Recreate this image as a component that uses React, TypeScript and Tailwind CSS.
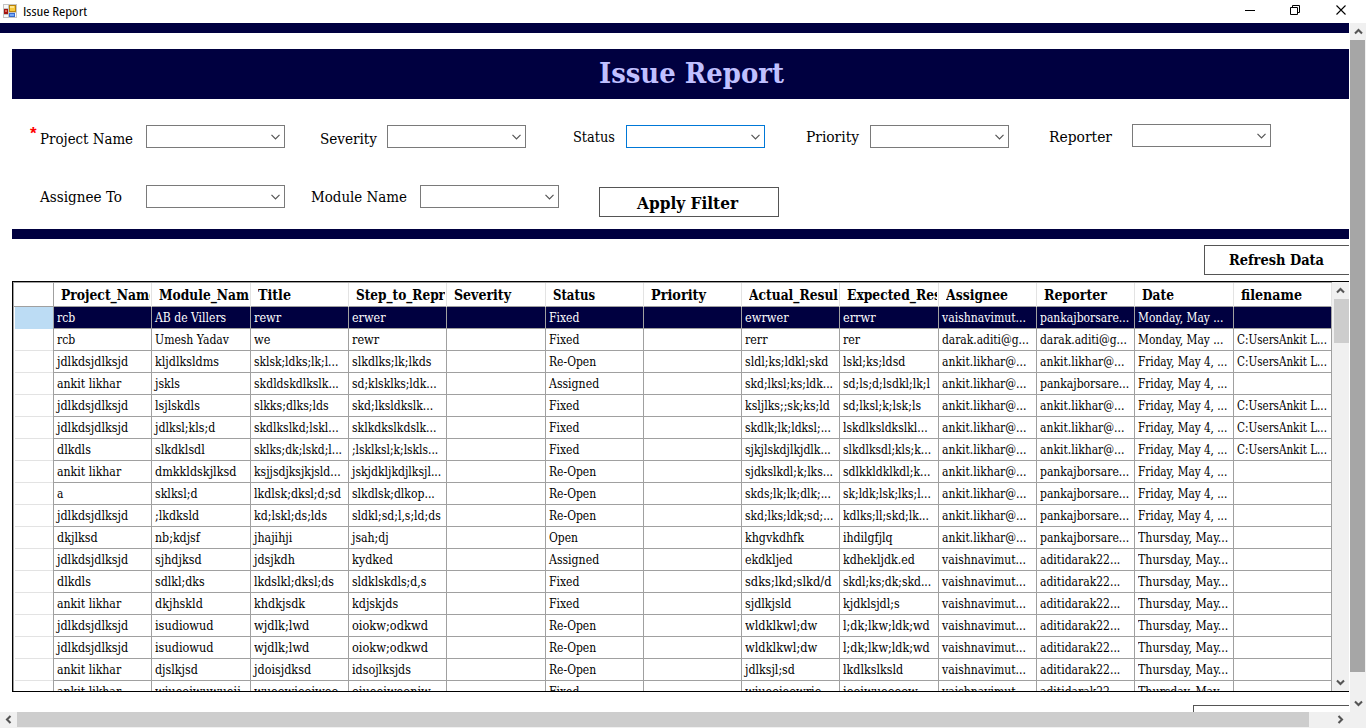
import { useLayoutEffect, useRef } from "react";

const SERIF = "font-['DejaVu_Serif_Condensed','DejaVu_Serif',serif] [font-stretch:condensed]";

/* Text set to a fixed advance width. */
function Fit({ text, width, className = "" }: { text: string; width: number; className?: string }) {
  const ref = useRef<HTMLSpanElement>(null);
  useLayoutEffect(() => {
    const el = ref.current;
    if (el && el.offsetWidth) {
      el.style.transform = "none";
      el.style.transform = `scaleX(${width / el.getBoundingClientRect().width})`;
    }
  }, [text, width]);
  return (
    <span className="block shrink-0 whitespace-pre" style={{ width }}>
      <span ref={ref} className={`inline-block origin-left whitespace-pre align-top ${className}`}>
        {text}
      </span>
    </span>
  );
}

/* Advance widths of the grid face, in em. */
const ADVANCE: Record<string, number> = {
  a: 0.488, b: 0.547, c: 0.441, d: 0.555, e: 0.488, f: 0.303, g: 0.494, h: 0.552, i: 0.278, j: 0.266,
  k: 0.524, l: 0.271, m: 0.832, n: 0.558, o: 0.531, p: 0.556, q: 0.547, r: 0.414, s: 0.43, t: 0.338,
  u: 0.552, v: 0.504, w: 0.774, x: 0.483, y: 0.504, z: 0.455, " ": 0.22, ".": 0.22, ",": 0.205,
  ";": 0.268, ":": 0.262, "-": 0.31, "/": 0.49, "@": 0.9, "2": 0.554, "4": 0.554,
  A: 0.623, B: 0.611, C: 0.563, D: 0.662, F: 0.537, L: 0.5, M: 0.815, O: 0.63, R: 0.6,
  T: 0.55, U: 0.63, V: 0.605, Y: 0.5,
};
const measure = (s: string) => [...s].reduce((sum, c) => sum + (ADVANCE[c] ?? 0.5), 0) * 13;

const COLS = "grid grid-cols-[40px_98px_99px_98px_98px_99px_98px_98px_98px_99px_98px_98px_99px_98px]";

const HEADERS: [string, number][] = [
  ["Project_Name", 96], ["Module_Nam", 90], ["Title", 33], ["Step_to_Repr", 89], ["Severity", 57],
  ["Status", 42], ["Priority", 55], ["Actual_Resul", 89], ["Expected_Res", 94], ["Assignee", 62],
  ["Reporter", 63], ["Date", 32], ["filename", 61],
];

const V = "vaishnavimut...";
const K = "ankit.likhar@...";
const P = "pankajborsare...";
const A = "aditidarak22...";
const D = "darak.aditi@g...";
const MON = "Monday, May ...";
const FRI = "Friday, May 4, ...";
const THU = "Thursday, May...";
const FILE = "C:UsersAnkit L...";

const ROWS: string[][] = [
  ["rcb", "AB de Villers", "rewr", "erwer", "", "Fixed", "", "ewrwer", "errwr", V, P, MON, ""],
  ["rcb", "Umesh Yadav", "we", "rewr", "", "Fixed", "", "rerr", "rer", D, D, MON, FILE],
  ["jdlkdsjdlksjd", "kljdlksldms", "sklsk;ldks;lk;l...", "slkdlks;lk;lkds", "", "Re-Open", "", "sldl;ks;ldkl;skd", "lskl;ks;ldsd", K, K, FRI, FILE],
  ["ankit likhar", "jskls", "skdldskdlkslk...", "sd;klsklks;ldk...", "", "Assigned", "", "skd;lksl;ks;ldk...", "sd;ls;d;lsdkl;lk;l", K, P, FRI, ""],
  ["jdlkdsjdlksjd", "lsjlskdls", "slkks;dlks;lds", "skd;lksldkslk...", "", "Fixed", "", "ksljlks;;sk;ks;ld", "sd;lksl;k;lsk;ls", K, K, FRI, FILE],
  ["jdlkdsjdlksjd", "jdlksl;kls;d", "skdlkslkd;lskl...", "sklkdkslkdslk...", "", "Fixed", "", "skdlk;lk;ldksl;...", "lskdlksldkslkl...", K, K, FRI, FILE],
  ["dlkdls", "slkdklsdl", "sklks;dk;lskd;l...", ";lsklksl;k;lskls...", "", "Fixed", "", "sjkjlskdjlkjdlk...", "slkdlksdl;kls;k...", K, K, FRI, FILE],
  ["ankit likhar", "dmkkldskjlksd", "ksjjsdjksjkjsld...", "jskjdkljkdjlksjl...", "", "Re-Open", "", "sjdkslkdl;k;lks...", "sdlkkldklkdl;k...", K, P, FRI, ""],
  ["a", "sklksl;d", "lkdlsk;dksl;d;sd", "slkdlsk;dlkop...", "", "Re-Open", "", "skds;lk;lk;dlk;...", "sk;ldk;lsk;lks;l...", K, P, FRI, ""],
  ["jdlkdsjdlksjd", ";lkdksld", "kd;lskl;ds;lds", "sldkl;sd;l,s;ld;ds", "", "Re-Open", "", "skd;lks;ldk;sd;...", "kdlks;ll;skd;lk...", K, P, FRI, ""],
  ["dkjlksd", "nb;kdjsf", "jhajihji", "jsah;dj", "", "Open", "", "khgvkdhfk", "ihdilgfjlq", K, P, THU, ""],
  ["jdlkdsjdlksjd", "sjhdjksd", "jdsjkdh", "kydked", "", "Assigned", "", "ekdkljed", "kdhekljdk.ed", V, A, THU, ""],
  ["dlkdls", "sdlkl;dks", "lkdslkl;dksl;ds", "sldklskdls;d,s", "", "Fixed", "", "sdks;lkd;slkd/d", "skdl;ks;dk;skd...", V, A, THU, ""],
  ["ankit likhar", "dkjhskld", "khdkjsdk", "kdjskjds", "", "Fixed", "", "sjdlkjsld", "kjdklsjdl;s", V, A, THU, ""],
  ["jdlkdsjdlksjd", "isudiowud", "wjdlk;lwd", "oiokw;odkwd", "", "Re-Open", "", "wldklkwl;dw", "l;dk;lkw;ldk;wd", V, A, THU, ""],
  ["jdlkdsjdlksjd", "isudiowud", "wjdlk;lwd", "oiokw;odkwd", "", "Re-Open", "", "wldklkwl;dw", "l;dk;lkw;ldk;wd", V, A, THU, ""],
  ["ankit likhar", "djslkjsd", "jdoisjdksd", "idsojlksjds", "", "Re-Open", "", "jdlksjl;sd", "lkdlkslksld", V, A, THU, ""],
  ["ankit likhar", "wiueoiwuwueii", "wueowieoiweo", "oiueoiweoniw", "", "Fixed", "", "wiueoieowrie", "iooiwueoeow", V, A, THU, ""],
];

function Chevron({ dir, className = "" }: { dir: "up" | "down" | "left" | "right"; className?: string }) {
  const d = {
    up: "M1 6.5 4.5 3 8 6.5",
    down: "M1 2.5 4.5 6 8 2.5",
    left: "M6.5 1 3 4.5 6.5 8",
    right: "M2.5 1 6 4.5 2.5 8",
  }[dir];
  return (
    <svg viewBox="0 0 9 9" className={`h-[9px] w-[9px] shrink-0 ${className}`} fill="none" stroke="#555" strokeWidth="2.1">
      <path d={d} />
    </svg>
  );
}

function Label({ text, width, className }: { text: string; width: number; className: string }) {
  return (
    <div className={`shrink-0 text-[14px] leading-5 ${className}`}>
      <Fit text={text} width={width} />
    </div>
  );
}

function Combo({ className, active = false }: { className: string; active?: boolean }) {
  return (
    <div className={`flex h-[23px] w-[139px] shrink-0 items-center justify-end border bg-white pr-1 ${active ? "border-[#0078d7]" : "border-[#7a7a7a]"} ${className}`}>
      <svg viewBox="0 0 9 6" className="h-1.5 w-[9px]" fill="none" stroke="#555" strokeWidth="1.2">
        <path d="M.5 .8 4.5 4.8 8.5 .8" />
      </svg>
    </div>
  );
}

function TitleBar() {
  return (
    <header className="flex h-[23px] shrink-0 items-start bg-white">
      <svg viewBox="0 0 14 14" className="mt-1 ml-[3px] h-3.5 w-3.5 shrink-0" shapeRendering="crispEdges">
        <path d="M0 0h14v14H0z" fill="#c4c4c4" />
        <path d="M1 1h4v3H1zM1 11h4v2H1zM12 9h1v4h-1z" fill="#f8f8f8" />
        <path d="M6 1h7v7H6z" fill="#b98208" />
        <path d="M7 2h5v5H7z" fill="#f7c93c" />
        <path d="M7 2h4v2H7z" fill="#ffe68b" />
        <path d="M1 5h4v5H1z" fill="#a41410" />
        <path d="M2 6h2v2H2z" fill="#de675c" />
        <path d="M6 9h6v4H6z" fill="#3568cf" />
        <path d="M7 10h4v2H7z" fill="#78a9f5" />
      </svg>
      <div className="mt-1 ml-1.5 font-['Open_Sans',sans-serif] text-[12px] leading-4 text-black">
        <Fit text="Issue Report" width={64} />
      </div>
      <div className="flex-1" />
      <svg viewBox="0 0 104 12" className="mt-1 mr-[19px] h-3 w-[104px] shrink-0" fill="none" stroke="#000">
        <path d="M2 6.5h10" />
        <path d="M47.5 3.5h7v7h-7zM49.5 3.5v-2h7v7h-2" />
        <path d="M93.5 1.5l9 9M102.500 1.500l-9 9" strokeWidth="1.1" />
      </svg>
    </header>
  );
}

function Filters() {
  return (
    <section className="h-[130px] shrink-0">
      <div className="flex h-[62px] items-start">
        <div className="mt-[25px] ml-[30px] w-2.5 shrink-0 font-['Liberation_Sans',sans-serif] text-[17px] leading-5 font-bold text-[#f00]">*</div>
        <Label text="Project Name" width={93} className="mt-[30px]" />
        <Combo className="mt-[26px] ml-[13px]" />
        <Label text="Severity" width={57} className="mt-[30px] ml-[35px]" />
        <Combo className="mt-[26px] ml-[10px]" />
        <Label text="Status" width={42} className="mt-[28px] ml-[47px]" />
        <Combo active className="mt-[26px] ml-[11px]" />
        <Label text="Priority" width={53} className="mt-[28px] ml-[41px]" />
        <Combo className="mt-[26px] ml-[11px]" />
        <Label text="Reporter" width={63} className="mt-[28px] ml-[40px]" />
        <Combo className="mt-[25px] ml-5" />
      </div>
      <div className="flex h-[68px] items-start">
        <Label text="Assignee To" width={82} className="mt-[26px] ml-10" />
        <Combo className="mt-6 ml-6" />
        <Label text="Module Name" width={96} className="mt-[26px] ml-[26px]" />
        <Combo className="mt-6 ml-[13px]" />
        <button className="mt-[26px] ml-10 flex h-[30px] w-[180px] shrink-0 justify-center border border-[#555] pr-[3px] text-[17px] leading-[30px] font-bold">
          <Fit text="Apply Filter" width={101} />
        </button>
      </div>
    </section>
  );
}

function DataGrid() {
  return (
    <section className="ml-3 flex h-[411px] w-[1337px] shrink-0 border-y border-l border-black bg-white">
      <div className="h-[409px] w-[1319px] shrink-0 overflow-hidden border-t border-l border-[#a0a0a0]">
        <div className={`${COLS} h-6 border-b border-[#a0a0a0]`}>
          <div className="border-r border-[#a0a0a0]" />
          {HEADERS.map(([text, width]) => (
            <div key={text} className="border-r border-[#e3e3e3] pr-px pl-[7px] text-[14px] leading-[25px] font-bold">
              <div className="overflow-hidden">
                <Fit text={text} width={width} />
              </div>
            </div>
          ))}
        </div>
        {ROWS.map((row, r) => (
          <div key={r} className={`${COLS} h-[22px]`}>
            <div className="border-r border-[#a0a0a0] pl-px">
              <div className={`h-[22px] border-b ${r === 0 ? "border-[#bcdcf4] bg-[#bcdcf4]" : "border-[#e3e3e3]"}`} />
            </div>
            {row.map((text, c) => (
              <div
                key={c}
                className={`overflow-hidden border-r border-b border-[#a0a0a0] pl-[3px] text-[12px] leading-[23px] ${r === 0 ? "bg-[#000040] text-white" : "text-black"}`}
              >
                {text && <Fit text={text} width={measure(text)} />}
              </div>
            ))}
          </div>
        ))}
      </div>
      <div className="flex flex-1 flex-col items-center bg-[#f0f0f0]">
        <div className="flex h-[17px] items-center"><Chevron dir="up" /></div>
        <div className="ml-px h-11 w-[15px] bg-[#cdcdcd]" />
        <div className="flex-1" />
        <div className="flex h-[17px] items-center"><Chevron dir="down" /></div>
      </div>
    </section>
  );
}

export default function App() {
  return (
    <div className={`flex h-[728px] w-[1366px] flex-col overflow-hidden bg-white text-black ${SERIF}`}>
      <TitleBar />
      <div className="flex h-[689px] shrink-0">
        <main className="flex w-[1349px] shrink-0 flex-col overflow-hidden">
          <div className="h-2.5 shrink-0 bg-[#000040]" />
          <div className="mt-4 ml-3 flex h-[50px] shrink-0 bg-[#000040] pl-[587px] text-[28px] leading-[49px] font-bold text-[#c0c0ff]">
            <Fit text="Issue Report" width={185} />
          </div>
          <Filters />
          <div className="ml-3 h-2.5 shrink-0 bg-[#000040]" />
          <button className="mt-1.5 ml-[1204px] flex h-[30px] shrink-0 border-y border-l border-[#555] pl-[23px] text-[14px] leading-[29px] font-bold">
            <Fit text="Refresh Data" width={95} />
          </button>
          <div className="h-1.5 shrink-0" />
          <DataGrid />
          <div className="mt-[13px] ml-[1193px] h-[7px] shrink-0 border-t border-l border-[#555]" />
        </main>
        <div className="flex w-[17px] flex-col items-center border-l border-white bg-[#f0f0f0]">
          <div className="flex h-[17px] items-center"><Chevron dir="up" /></div>
          <div className="mr-px h-[632px] w-[15px] bg-[#a6a6a6]" />
          <div className="flex flex-1 items-end pb-1"><Chevron dir="down" /></div>
        </div>
      </div>
      <div className="flex h-4 shrink-0 items-start bg-[#f0f0f0]">
        <div className="flex h-[15px] w-[17px] items-center justify-center"><Chevron dir="left" /></div>
        <div className="h-[15px] w-[1292px] bg-[#cdcdcd]" />
        <div className="flex h-[15px] w-10 items-center justify-end pr-1"><Chevron dir="right" /></div>
      </div>
    </div>
  );
}
